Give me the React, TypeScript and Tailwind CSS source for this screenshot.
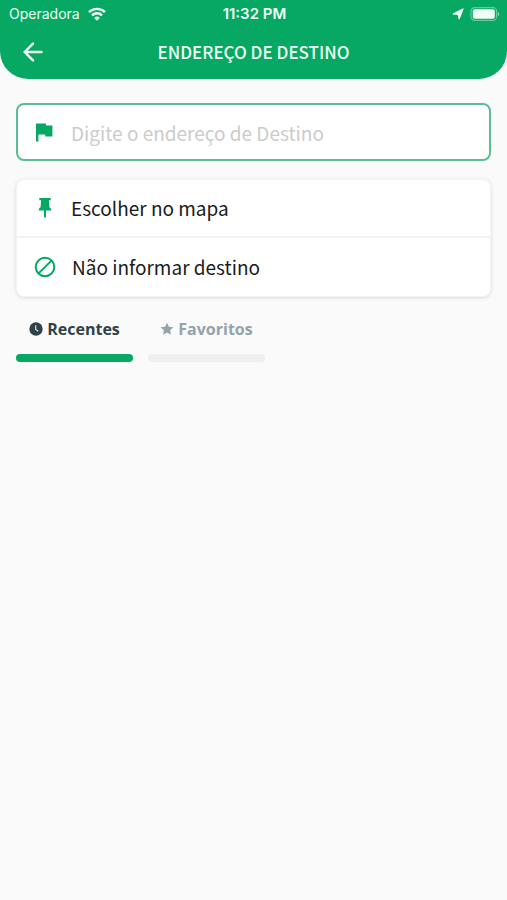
import { useState } from "react"

const tabs = [
  { id: "recentes", label: "Recentes", icon: ClockIcon },
  { id: "favoritos", label: "Favoritos", icon: StarIcon },
]

function WifiIcon() {
  return (
    <svg viewBox="0 0 18 14" className="h-[14px] w-[18px]" fill="none" stroke="currentColor" strokeWidth="2.4">
      <path d="M1 5.2a11.4 11.4 0 0 1 16 0" />
      <path d="M4 8.3a7.1 7.1 0 0 1 10 0" />
      <path d="M9 13.8 6.2 10.9a4 4 0 0 1 5.6 0z" fill="currentColor" stroke="none" />
    </svg>
  )
}

function LocationIcon() {
  return (
    <svg viewBox="0 0 12 12" className="size-3" fill="currentColor">
      <path d="M11.2.8 7.2 11.2 6 6.4.9 6z" stroke="currentColor" strokeWidth="1" strokeLinejoin="round" />
    </svg>
  )
}

function BatteryIcon() {
  return (
    <svg viewBox="0 0 30 14" className="h-[14px] w-[30px]" fill="currentColor">
      <rect x="1" y=".7" width="25.6" height="12.6" rx="3.6" fill="none" stroke="currentColor" strokeOpacity=".4" strokeWidth="1.2" />
      <rect x="2.8" y="2.3" width="22" height="9.4" rx="2" />
      <path d="M27.8 4.7c2 .7 2 3.9 0 4.6z" opacity=".5" />
    </svg>
  )
}

function ArrowIcon() {
  return (
    <svg viewBox="0 0 20 20" className="size-5" fill="none" stroke="currentColor" strokeWidth="2.4" strokeLinecap="round" strokeLinejoin="round">
      <path d="M18.6 10H1.6M10 1.6 1.6 10l8.4 8.4" />
    </svg>
  )
}

function FlagIcon() {
  return (
    <svg viewBox="0 0 20 20" className="size-5" fill="currentColor">
      <path d="M1 1.5h9.8l.4 2H17.4v11h-7l-.4-2.1H3.4v7H1z" />
    </svg>
  )
}

function PinIcon() {
  return (
    <svg viewBox="0 0 20 22" className="h-[22px] w-5" fill="currentColor">
      <path d="M4.3 1h11.4v2.2h-1.8l.5 7c1.2.7 1.9 1.7 2 3.2H11v6.3l-1 1.3-1-1.3v-6.3H3.6c.1-1.5.8-2.5 2-3.2l.5-7H4.3z" />
    </svg>
  )
}

function BanIcon() {
  return (
    <svg viewBox="0 0 22 22" className="size-[22px]" fill="none" stroke="currentColor" strokeWidth="2">
      <circle cx="11" cy="11" r="9.3" />
      <path d="M4.6 17.4 17.4 4.6" />
    </svg>
  )
}

function ClockIcon() {
  return (
    <svg viewBox="0 0 14 14" className="size-[14px]">
      <circle cx="7" cy="7" r="6.7" fill="currentColor" />
      <path d="M6.7 3.2v4.2l2.6 1.9" fill="none" stroke="#d5dddd" strokeWidth="1.2" />
    </svg>
  )
}

function StarIcon() {
  return (
    <svg viewBox="0 0 14 14" className="size-[14px]" fill="currentColor">
      <path d="M7 .7 8.9 4.8l4.5.5-3.3 3 .9 4.5L7 10.6l-4 2.2.9-4.5-3.3-3 4.5-.5z" />
    </svg>
  )
}

export default function App() {
  const [address, setAddress] = useState("")
  const [activeTab, setActiveTab] = useState("recentes")

  return (
    <div className="min-h-screen bg-[#fafafa] font-['Noto_Sans_CJK_SC',sans-serif] text-[#1b1b1b]">
      <header className="rounded-b-[28px] bg-[#06a863] text-[#effff6]">
        {/* Status bar */}
        <div className="grid h-7 grid-cols-3 items-center pl-[9px] pr-[7px] font-['Inter',sans-serif] text-sm">
          <div className="flex items-center gap-2">
            <span>Operadora</span>
            <WifiIcon />
          </div>
          <span className="text-center text-[15px] font-semibold">11:32 PM</span>
          <div className="flex items-center justify-end gap-1.5">
            <LocationIcon />
            <BatteryIcon />
          </div>
        </div>

        {/* Title bar */}
        <div className="grid h-[51px] grid-cols-[32px_1fr_32px] items-start px-[23px]">
          <button type="button" aria-label="Voltar" className="flex h-12 items-center">
            <ArrowIcon />
          </button>
          <h1 className="text-center text-[17px] font-medium leading-[48px]">ENDEREÇO DE DESTINO</h1>
        </div>
      </header>

      <main className="px-4 pt-6">
        <label className="flex h-[58px] items-center gap-4 rounded-lg border-2 border-[#5bbd94] bg-white pl-[17px] pr-4 text-[#06a863]">
          <FlagIcon />
          <input
            type="text"
            aria-label="Endereço de destino"
            placeholder="Digite o endereço de Destino"
            value={address}
            onChange={(e) => setAddress(e.target.value)}
            className="h-full min-w-0 flex-1 text-[19px] text-[#1b1b1b] outline-none placeholder:text-[#cccccc]"
          />
        </label>

        <div className="mt-[18px] divide-y-2 divide-[#f2f2f2] rounded-lg border border-[#f4f4f4] bg-white text-[19px] shadow-[0_1px_4px_rgba(0,0,0,0.12)]">
          <button type="button" className="flex h-[58px] w-full items-center gap-4 px-[18px]">
            <span className="text-[#06a863]"><PinIcon /></span>
            Escolher no mapa
          </button>
          <button type="button" className="flex h-[58px] w-full items-center gap-4 px-[17px]">
            <span className="text-[#06a863]"><BanIcon /></span>
            Não informar destino
          </button>
        </div>

        {/* Tabs */}
        <div role="tablist" className="mt-5 flex gap-[15px] font-['Open_Sans',sans-serif] text-base font-bold">
          {tabs.map(({ id, label, icon: Icon }) => {
            const active = activeTab === id
            return (
              <button
                key={id}
                type="button"
                role="tab"
                aria-selected={active}
                onClick={() => setActiveTab(id)}
                className={`w-[117px] ${active ? "text-[#2f4249]" : "text-[#94a3a8]"}`}
              >
                <span className="flex items-center justify-center gap-1">
                  <Icon />
                  {label}
                </span>
                <span className={`mt-[13px] block h-2 rounded-full ${active ? "bg-[#06a863]" : "bg-[#eeefef]"}`} />
              </button>
            )
          })}
        </div>
      </main>
    </div>
  )
}
